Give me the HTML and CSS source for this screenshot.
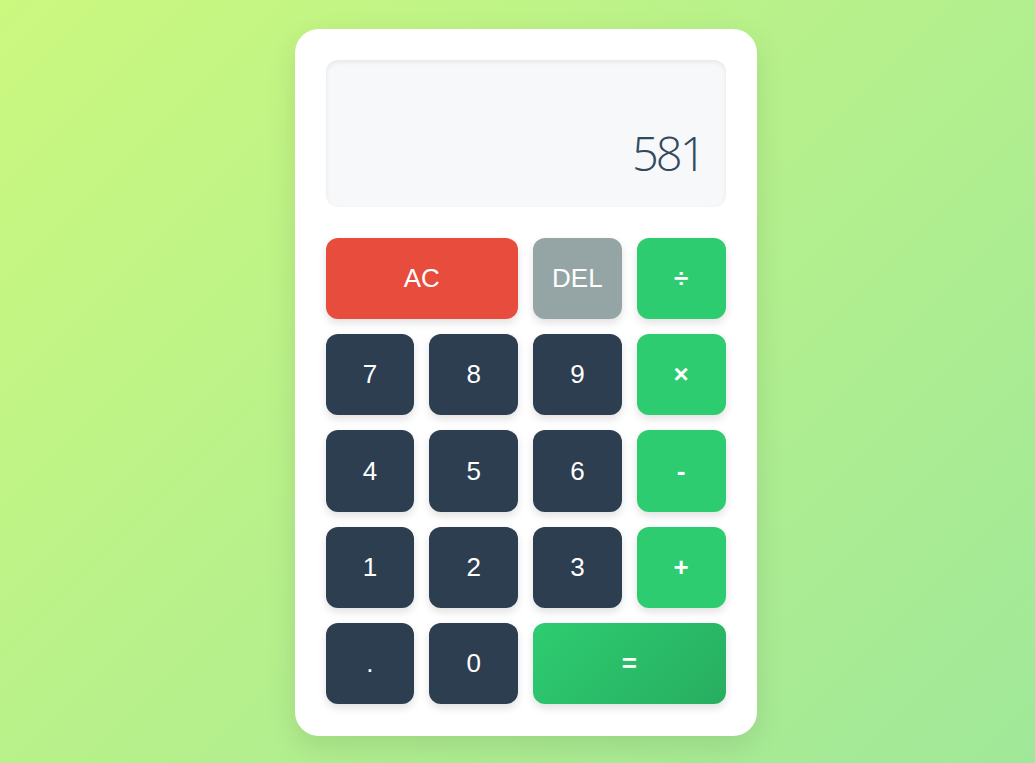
FILE: index.html
```html
<!DOCTYPE html>
<html lang="en">
<head>
<meta charset="utf-8">
<title>Calculator</title>
<link rel="stylesheet" href="styles.css">
</head>
<body>
<main class="calculator">
  <div class="display">581</div>
  <div class="keys">
    <button class="key key-clear span-2">AC</button>
    <button class="key key-del">DEL</button>
    <button class="key key-op">÷</button>
    <button class="key key-num">7</button>
    <button class="key key-num">8</button>
    <button class="key key-num">9</button>
    <button class="key key-op">×</button>
    <button class="key key-num">4</button>
    <button class="key key-num">5</button>
    <button class="key key-num">6</button>
    <button class="key key-op">-</button>
    <button class="key key-num">1</button>
    <button class="key key-num">2</button>
    <button class="key key-num">3</button>
    <button class="key key-op">+</button>
    <button class="key key-num">.</button>
    <button class="key key-num">0</button>
    <button class="key key-equals span-2">=</button>
  </div>
</main>
</body>
</html>
```
FILE: styles.css
```css
* { box-sizing: border-box; }
html, body { height: 100%; }
body {
  margin: 0;
  padding: 2px 0 0 16px;
  display: flex;
  align-items: center;
  justify-content: center;
  background: linear-gradient(135deg, #cbf87f 0%, #a0e899 100%);
  font-family: "Liberation Sans", Arial, sans-serif;
}
.calculator {
  width: 462px;
  padding: 31px 31px 32px;
  background: #ffffff;
  border-radius: 24px;
  box-shadow: 0 10px 30px rgba(0, 0, 0, 0.1);
}
.display {
  height: 147px;
  display: flex;
  align-items: flex-end;
  justify-content: flex-end;
  padding: 0 22px 30px;
  background: #f7f8fa;
  border-radius: 12px;
  box-shadow: inset 0 2px 5px rgba(0, 0, 0, 0.07);
  font-family: "Open Sans", sans-serif;
  font-weight: 300;
  font-size: 47px;
  letter-spacing: -3px;
  line-height: 1;
  color: #34495e;
  margin-bottom: 31px;
}
.keys {
  display: grid;
  grid-template-columns: repeat(4, 1fr);
  grid-auto-rows: 81.25px;
  gap: 15px;
}
.key {
  border: none;
  border-radius: 12px;
  color: #ffffff;
  font-family: "Liberation Sans", Arial, sans-serif;
  font-size: 26px;
  box-shadow: 0 4px 8px rgba(0, 0, 0, 0.12);
  cursor: pointer;
  padding: 0;
}
.span-2 { grid-column: span 2; }
.key-num { background: #2c3e50; }
.key-op { background: #2ecc71; font-weight: 700; }
.key-clear { background: #e74c3c; }
.key-del { background: #95a5a6; }
.key-equals {
  background: linear-gradient(135deg, #2ecc71 0%, #27ae60 100%);
  font-weight: 700;
}
```
